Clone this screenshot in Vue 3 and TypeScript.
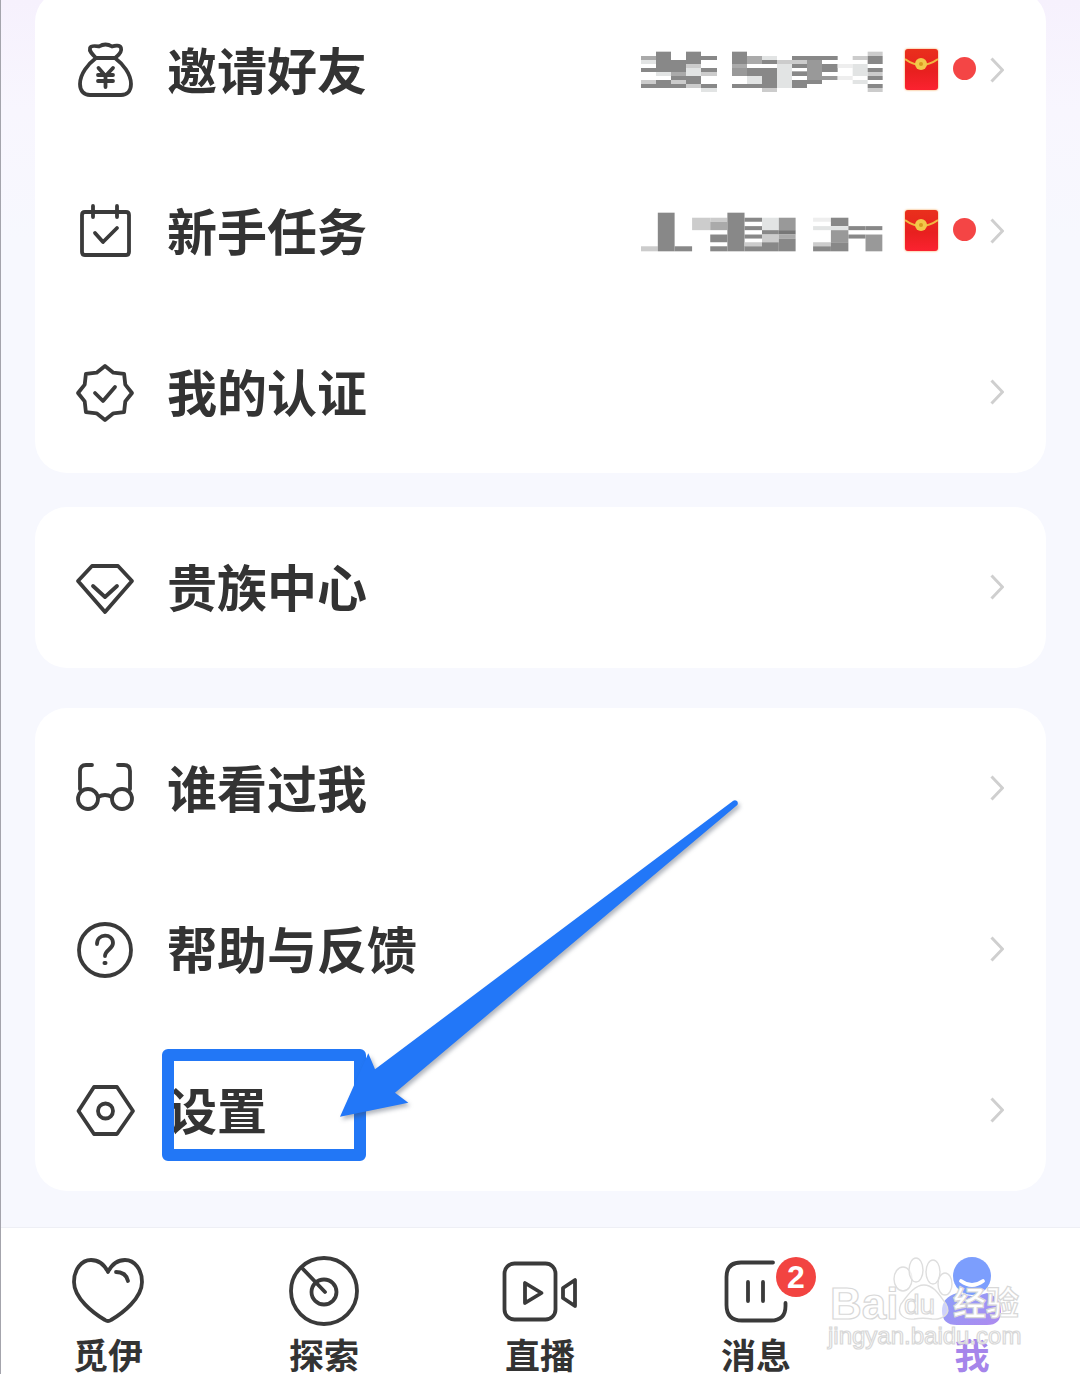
<script setup lang="ts">
type Cell = [number, number, string]
type Col = [number, number, Cell[]]

interface Row {
  label: string
  icon: string[]
  mosaic?: Col[]
  box?: string
}

const a = '#888'
const b = '#aaa'
const c = '#ccc'
const d = '#e2e4e4'

// 打码的色块，每列一组
const inviteMosaic: Col[] = [
  [30, 45, [[78, 12, b], [90, 12, d], [114, 12, a], [150, 12, c], [162, 12, a]]],
  [75, 45, [[65, 61, a], [126, 12, d], [150, 24, a]]],
  [120, 45, [[90, 36, a], [126, 12, b], [138, 12, a], [150, 12, c], [162, 12, a]]],
  [165, 45, [[65, 37, a], [102, 12, c], [114, 24, d], [138, 24, a], [162, 12, c]]],
  [210, 48, [[78, 12, a], [114, 12, a], [126, 12, c], [162, 12, a], [174, 12, d]]],
  [303, 45, [[65, 37, a], [102, 12, b], [114, 24, '#999'], [162, 12, a]]],
  [348, 45, [[78, 24, b], [114, 24, a], [138, 24, d], [162, 12, a]]],
  [393, 45, [[78, 12, d], [90, 12, a], [114, 60, a], [174, 12, c]]],
  [438, 45, [[90, 12, c], [102, 72, d]]],
  [483, 45, [[78, 12, a], [90, 12, c], [102, 12, a], [124, 14, a], [150, 24, a]]],
  [528, 45, [[78, 12, a], [90, 60, '#999'], [150, 12, a]]],
  [573, 47, [[78, 12, a], [102, 24, a], [138, 12, '#999']]],
  [620, 45, [[102, 12, '#eee'], [138, 12, '#eee']]],
  [665, 45, [[78, 12, c], [102, 36, d], [150, 12, d]]],
  [710, 45, [[65, 13, c], [78, 24, a], [114, 12, a], [126, 12, c], [138, 12, a], [162, 12, a], [174, 12, c]]],
]

const taskMosaic: Col[] = [
  [40, 50, [[645, 15, c]]],
  [90, 50, [[545, 115, a]]],
  [140, 52, [[645, 15, a]]],
  [192, 54, [[560, 37, c]]],
  [246, 51, [[560, 12, c], [572, 25, b], [610, 23, a], [645, 15, a]]],
  [297, 51, [[545, 115, a]]],
  [348, 52, [[560, 12, a], [585, 12, a], [610, 12, a], [633, 12, c], [645, 15, a]]],
  [400, 50, [[560, 37, d], [597, 13, a], [610, 23, c], [633, 27, a]]],
  [450, 50, [[560, 37, '#999'], [597, 13, '#777'], [610, 12, b], [622, 38, a]]],
  [552, 53, [[560, 12, '#eee'], [585, 12, d], [633, 12, c], [645, 15, a]]],
  [605, 52, [[560, 25, a], [585, 12, d], [597, 36, '#999'], [633, 27, a]]],
  [657, 51, [[585, 12, a], [610, 12, a]]],
  [708, 50, [[585, 12, a], [610, 50, '#999']]],
]

const groups: Row[][] = [
  [
    {
      label: '邀请好友',
      mosaic: inviteMosaic,
      box: '30 60 726 126',
      icon: [
        'M19 15C15 11 12 8 13 5C14 2 19 3 22 3.5C26 1 31 1 35 3.5C38 2.5 43 2 44 5C45 8 42 12 38 15C46 21 54 31 54 41C54 48 50 52 44 52H13C7 52 3 48 3 41C3 31 11 21 19 15Z',
        'M19 15H38',
        'M21.5 25L28.5 33L36 25M21 32H36M21 38H36M28.5 33V44',
      ],
    },
    {
      label: '新手任务',
      mosaic: taskMosaic,
      box: '40 540 720 125',
      icon: [
        'M8 8H49Q52 8 52 11V48Q52 51 49 51H8Q5 51 5 48V11Q5 8 8 8Z',
        'M16 2V13M40 2V13',
        'M18 29L26 38L40 24',
      ],
    },
    {
      label: '我的认证',
      icon: [
        'M28 1L36.4 7.7L47.1 8.9L48.3 19.6L55 28L48.3 36.4L47.1 47.1L36.4 48.3L28 55L19.6 48.3L8.9 47.1L7.7 36.4L1 28L7.7 19.6L8.9 8.9L19.6 7.7Z',
        'M18 28L26 36L38 22',
      ],
    },
  ],
  [
    {
      label: '贵族中心',
      icon: ['M15 6H41L55 21L28 52L1 21Z', 'M16 26L28 37L40 26'],
    },
  ],
  [
    {
      label: '谁看过我',
      icon: [
        'M15 4H9Q3 4 3 10V28M41 4H47Q53 4 53 10V28',
        'M21 38A10 10 0 1 1 1 38A10 10 0 1 1 21 38Z',
        'M55 38A10 10 0 1 1 35 38A10 10 0 1 1 55 38Z',
        'M21 36Q28 32 35 36',
      ],
    },
    {
      label: '帮助与反馈',
      icon: [
        'M54 28A26 26 0 1 1 2 28A26 26 0 1 1 54 28Z',
        'M20 22C20 11 36 11 36 21C36 27 28 28 28 34',
        'M27.4 41H28.6',
      ],
    },
    {
      label: '设置',
      icon: [
        'M17 4H40L56 28L40 51H17L1.5 28Z',
        'M36 28A7.5 7.5 0 1 1 21 28A7.5 7.5 0 1 1 36 28Z',
      ],
    },
  ],
]

const cellsOf = (cols: Col[]) =>
  cols.flatMap(([x, w, cells]) => cells.map(([y, h, fill]) => ({ x, y, w, h, fill })))
</script>

<template>
  <div class="page">
    <section v-for="(group, i) in groups" :key="i" class="card">
      <div v-for="row in group" :key="row.label" class="row">
        <svg class="row-icon" viewBox="0 0 56 56">
          <path v-for="p in row.icon" :key="p" :d="p" />
        </svg>
        <span class="row-label">{{ row.label }}</span>
        <template v-if="row.mosaic">
          <svg class="mosaic" :viewBox="row.box" preserveAspectRatio="none">
            <rect
              v-for="(r, n) in cellsOf(row.mosaic)"
              :key="n"
              :x="r.x"
              :y="r.y"
              :width="r.w"
              :height="r.h"
              :fill="r.fill"
            />
          </svg>
          <svg class="envelope" viewBox="0 0 33 41">
            <defs>
              <linearGradient id="packet" x1="0" y1="0" x2="0" y2="1">
                <stop offset="0" stop-color="#e9301c" />
                <stop offset="0.55" stop-color="#e8201f" />
                <stop offset="1" stop-color="#fb2230" />
              </linearGradient>
            </defs>
            <rect width="33" height="41" rx="3" fill="url(#packet)" />
            <path d="M0 10Q16 22 33 10" fill="none" stroke="#f0b840" stroke-width="2" />
            <circle cx="16" cy="15" r="6" fill="#f2c94a" />
            <circle cx="16" cy="15" r="2" fill="#d99a20" />
          </svg>
          <i class="dot"></i>
        </template>
        <svg class="chevron" viewBox="0 0 14 26">
          <path d="M1.5 1.5L12.5 13L1.5 24.5" />
        </svg>
      </div>
    </section>

    <nav class="tabs">
      <div class="tab">
        <svg class="tab-icon" viewBox="0 0 90 72">
          <path d="M45 17C41 9 35 5 28 5C18 5 11 15 11 27C11 43 30 58 42 65Q45 67 48 65C60 58 79 43 79 27C79 15 72 5 62 5C55 5 49 9 45 17Z" />
          <path d="M53 17Q63 17 65 26" />
        </svg>
        <span>觅伊</span>
      </div>
      <div class="tab">
        <svg class="tab-icon" viewBox="0 0 90 72">
          <circle cx="45" cy="36" r="33" />
          <circle cx="45" cy="37" r="12.5" />
          <path d="M23 13L46 37" />
        </svg>
        <span>探索</span>
      </div>
      <div class="tab">
        <svg class="tab-icon" viewBox="0 0 90 72">
          <rect x="9.5" y="8.5" width="51" height="56" rx="10" />
          <path d="M30 28V48L46.5 38Z" />
          <path d="M80 25V51L68 43V33Z" />
        </svg>
        <span>直播</span>
      </div>
      <div class="tab">
        <div class="tab-icon-wrap">
          <svg class="tab-icon" viewBox="0 0 90 72">
            <path d="M62 7.5H30Q15.5 7.5 15.5 22V50Q15.5 65.5 31 65.5H60Q74.5 65.5 74.5 51V48" />
            <path d="M37 27V46M52 27V46" />
          </svg>
          <b class="badge">2</b>
        </div>
        <span>消息</span>
      </div>
      <div class="tab active">
        <svg class="tab-icon" viewBox="0 0 90 72">
          <defs>
            <linearGradient id="meBody" x1="0" y1="0" x2="1" y2="1">
              <stop offset="0" stop-color="#8aa0fa" />
              <stop offset="1" stop-color="#ae8aef" />
            </linearGradient>
          </defs>
          <path class="me-body" d="M30 38Q45 44 60 38Q74 42 74 56Q74 70 60 70H30Q15 70 15 56Q15 42 30 38Z" />
          <circle class="me-head" cx="45" cy="21" r="19" />
          <path class="me-smile" d="M34 26Q45 34 56 26" />
        </svg>
        <span>我</span>
      </div>
    </nav>

    <!-- 截图上的标注 -->
    <div class="mark-box"></div>
    <svg class="mark-arrow" viewBox="0 0 1080 1374">
      <path d="M733.3 800.7Q735 799.5 737 801Q738.5 803 737.3 805L395 1092.7L408.3 1102.7L340 1116.7L368.3 1053.3L375 1069.3Z" />
    </svg>

    <!-- 百度经验水印 -->
    <svg class="watermark" viewBox="826 1250 200 100">
      <g class="paw">
        <ellipse cx="903" cy="1279" rx="9" ry="12" />
        <ellipse cx="916" cy="1270" rx="7" ry="12" />
        <ellipse cx="933" cy="1272" rx="7" ry="12" />
        <ellipse cx="945" cy="1284" rx="7" ry="11" />
        <path d="M924 1285C934 1285 940 1296 946 1304C952 1314 942 1320 932 1319C926 1318 920 1318 914 1319C904 1320 896 1314 901 1304C907 1296 914 1285 924 1285Z" />
      </g>
      <text x="830" y="1319" class="wm-bai">Bai</text>
      <text x="904" y="1314" class="wm-du">du</text>
      <text x="953" y="1315" class="wm-cn">经验</text>
      <text x="828" y="1344" class="wm-url">jingyan.baidu.com</text>
    </svg>
  </div>
</template>

<style scoped>
.page {
  position: relative;
  width: 1080px;
  height: 1374px;
  box-sizing: border-box;
  overflow: hidden;
  display: flex;
  flex-direction: column;
  gap: 36px;
  background: linear-gradient(180deg, #f6f1fd 0, #f8f6fe 110px, #f7f8fe 240px);
  border-left: 1px solid #a4a4ac;
  font-family: "Noto Sans CJK SC", "Liberation Sans", sans-serif;
  color: #333;
}

.card {
  margin: 0 34px;
  background: #fff;
  border-radius: 32px;
}

.card:first-child {
  margin-top: -10px;
}

.card:nth-child(2) {
  margin-top: -2px;
}

.card:nth-child(3) {
  margin-top: 4px;
}

.row {
  height: 161px;
  display: flex;
  align-items: center;
  padding: 0 42px;
}

.row-icon {
  width: 56px;
  height: 56px;
  flex-shrink: 0;
  overflow: visible;
}

.row-icon path,
.tab-icon path,
.tab-icon circle,
.tab-icon rect {
  fill: none;
  stroke: #3a3a3a;
  stroke-width: 3.8;
  stroke-linecap: round;
  stroke-linejoin: round;
}

.row-label {
  margin: -5px 0 0 34px;
  flex: 1;
  font-size: 50px;
  font-weight: 700;
  line-height: 1;
}

.mosaic {
  width: 242px;
  height: 42px;
  margin-right: 22px;
  filter: blur(0.5px);
}

.envelope {
  width: 33px;
  height: 41px;
  flex-shrink: 0;
  margin-top: -2px;
  filter: drop-shadow(0 0 1px #f5a04a);
}

.dot {
  width: 23px;
  height: 23px;
  margin: -4px 14px 0 15px;
  border-radius: 50%;
  background: #f44545;
}

.chevron {
  width: 14px;
  height: 26px;
  flex-shrink: 0;
  margin-top: -2px;
}

.chevron path {
  fill: none;
  stroke: #cfcfcf;
  stroke-width: 3;
}

.tabs {
  margin-top: auto;
  margin-left: -1px;
  height: 147px;
  box-sizing: border-box;
  padding-top: 27px;
  display: grid;
  grid-template-columns: repeat(5, 216px);
  background: #fff;
  border-top: 1px solid #eeeff5;
}

.tab {
  display: flex;
  flex-direction: column;
  align-items: center;
  font-size: 35px;
  font-weight: 700;
  line-height: 36px;
}

.tab span {
  margin-top: 9px;
}

.tab-icon-wrap {
  position: relative;
  height: 72px;
}

.tab-icon {
  display: block;
  width: 90px;
  height: 72px;
}

.tab-icon .me-body {
  fill: url(#meBody);
  stroke: none;
}

.tab-icon .me-head {
  fill: #7c9efd;
  stroke: none;
}

.tab-icon .me-smile {
  stroke: #fff;
}

.tab.active span {
  color: #a585ea;
}

.badge {
  position: absolute;
  left: 65px;
  top: 2px;
  width: 40px;
  height: 40px;
  border-radius: 50%;
  background: #f24441;
  color: #fff;
  font-family: "Liberation Sans", sans-serif;
  font-size: 32px;
  line-height: 40px;
  text-align: center;
}

.mark-box {
  position: absolute;
  left: 161px;
  top: 1049px;
  width: 204px;
  height: 112px;
  box-sizing: border-box;
  border: 12px solid #2277f6;
  border-radius: 6px;
}

.mark-arrow {
  position: absolute;
  left: -1px;
  top: 0;
  width: 1080px;
  height: 1374px;
  pointer-events: none;
  filter: drop-shadow(2px 3px 2px rgba(60, 70, 90, 0.4));
}

.mark-arrow path {
  fill: #2277f8;
}

.watermark {
  position: absolute;
  left: 825px;
  top: 1250px;
  width: 200px;
  height: 100px;
  pointer-events: none;
}

.paw ellipse,
.paw path {
  fill: rgba(255, 255, 255, 0.55);
  stroke: #dedede;
  stroke-width: 1.4;
}

.watermark text {
  font-family: "Liberation Sans", sans-serif;
  fill: rgba(255, 255, 255, 0.8);
  stroke: #d8d8d8;
  stroke-width: 1.2;
}

.wm-bai {
  font-size: 44px;
  font-weight: 700;
}

.wm-du {
  font-size: 28px;
}

.watermark .wm-cn {
  font-family: "Noto Sans CJK SC", sans-serif;
  font-size: 33px;
  font-weight: 700;
  fill: #fff;
}

.wm-url {
  font-size: 24px;
  stroke-width: 0.8;
  fill: rgba(255, 255, 255, 0.6);
}
</style>
